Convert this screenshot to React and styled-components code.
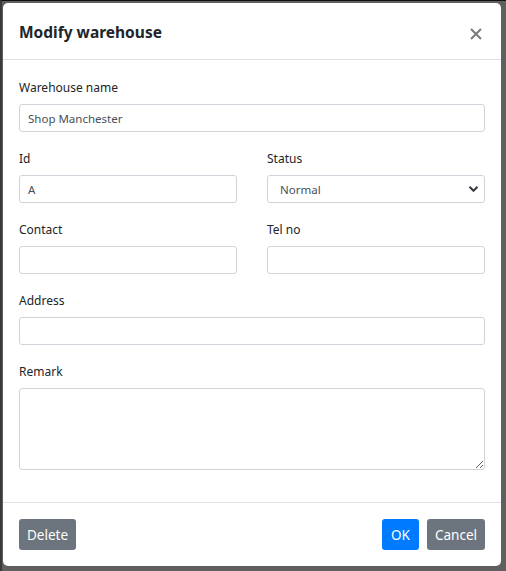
import React from "react";
import styled, { createGlobalStyle } from "styled-components";

const Global = createGlobalStyle`
  html, body { margin: 0; padding: 0; }
  body {
    background: #6b6b6b;
    font-family: "Noto Sans", "Open Sans", sans-serif;
    color: #212529;
  }
  * { box-sizing: border-box; }
`;

const Backdrop = styled.div`
  width: 506px;
  height: 571px;
  padding: 2px 5px 4px 1px;
  background: #5f5f5f;
  border-top: 1px solid #111;
  border-left: 2px solid #3a3a3a;
`;

const Modal = styled.div`
  background: #fff;
  border-radius: 5px;
  height: 563px;
  display: flex;
  flex-direction: column;
  overflow: hidden;
`;

const Header = styled.div`
  height: 57px;
  display: flex;
  align-items: center;
  justify-content: space-between;
  padding: 2px 16px 0;
  border-bottom: 1px solid #dee2e6;
`;

const Title = styled.h5`
  margin: 0;
  font-size: 15.5px;
  font-weight: 700;
  color: #212529;
`;

const Close = styled.button`
  border: none;
  background: none;
  padding: 0;
  margin-top: 3px;
  margin-right: 3px;
  display: flex;
  cursor: pointer;
`;

const Body = styled.div`
  padding: 16px 16px 0;
  flex: 1;
`;

const Row = styled.div`
  display: grid;
  grid-template-columns: 1fr 1fr;
  column-gap: 30px;
`;

const Group = styled.div`
  margin-bottom: 15px;
`;

const Label = styled.label`
  display: block;
  font-size: 12px;
  line-height: 21px;
  padding-top: 1px;
  margin-bottom: 6px;
  color: #212529;
`;

const Input = styled.input`
  display: block;
  width: 100%;
  height: 28px;
  padding: 0 8px;
  font-size: 11.5px;
  font-family: "Noto Sans", "Open Sans", sans-serif;
  color: #495057;
  border: 1px solid #ced4da;
  border-radius: 3px;
  background: #fff;
  outline: none;
`;

const SelectBox = styled.div`
  position: relative;
  height: 28px;
  border: 1px solid #ced4da;
  border-radius: 3px;
  display: flex;
  align-items: center;
  padding: 0 12px;
  font-size: 11.5px;
  color: #495057;
`;

const Chevron = styled.svg`
  position: absolute;
  right: 5px;
  top: 9px;
`;

const TextArea = styled.textarea`
  display: block;
  width: 100%;
  height: 82px;
  border: 1px solid #ced4da;
  border-radius: 3px;
  resize: vertical;
  font-family: "Noto Sans", sans-serif;
  outline: none;
`;

const Footer = styled.div`
  border-top: 1px solid #dee2e6;
  padding: 16px;
  height: 64px;
  display: flex;
  align-items: center;
`;

const Spacer = styled.div`
  flex: 1;
`;

const Button = styled.button`
  height: 31px;
  border: none;
  border-radius: 3px;
  padding: 0 ${(p) => p.$pad}px;
  font-family: "Noto Sans", sans-serif;
  font-size: 13.5px;
  color: #fff;
  background: ${(p) => (p.$primary ? "#007bff" : "#6c757d")};
  margin-left: ${(p) => p.$ml || 0}px;
`;

export default function App() {
  return (
    <>
      <Global />
      <Backdrop>
        <Modal>
          <Header>
            <Title>Modify warehouse</Title>
            <Close aria-label="Close">
              <svg width="12" height="12" viewBox="0 0 12 12">
                <path d="M1 1 L11 11 M11 1 L1 11" stroke="#7c7c7c" strokeWidth="2.1" />
              </svg>
            </Close>
          </Header>
          <Body>
            <Group>
              <Label>Warehouse name</Label>
              <Input defaultValue="Shop Manchester" />
            </Group>
            <Row>
              <Group>
                <Label>Id</Label>
                <Input defaultValue="A" />
              </Group>
              <Group>
                <Label>Status</Label>
                <SelectBox>
                  Normal
                  <Chevron width="11" height="8" viewBox="0 0 11 8">
                    <path d="M1.5 1.8 L5.5 5.8 L9.5 1.8" fill="none" stroke="#343a40" strokeWidth="2" />
                  </Chevron>
                </SelectBox>
              </Group>
            </Row>
            <Row>
              <Group>
                <Label>Contact</Label>
                <Input />
              </Group>
              <Group>
                <Label>Tel no</Label>
                <Input />
              </Group>
            </Row>
            <Group>
              <Label>Address</Label>
              <Input />
            </Group>
            <Group>
              <Label>Remark</Label>
              <TextArea />
            </Group>
          </Body>
          <Footer>
            <Button $pad={8}>Delete</Button>
            <Spacer />
            <Button $primary $pad={9}>OK</Button>
            <Button $pad={8} $ml={8}>Cancel</Button>
          </Footer>
        </Modal>
      </Backdrop>
    </>
  );
}
